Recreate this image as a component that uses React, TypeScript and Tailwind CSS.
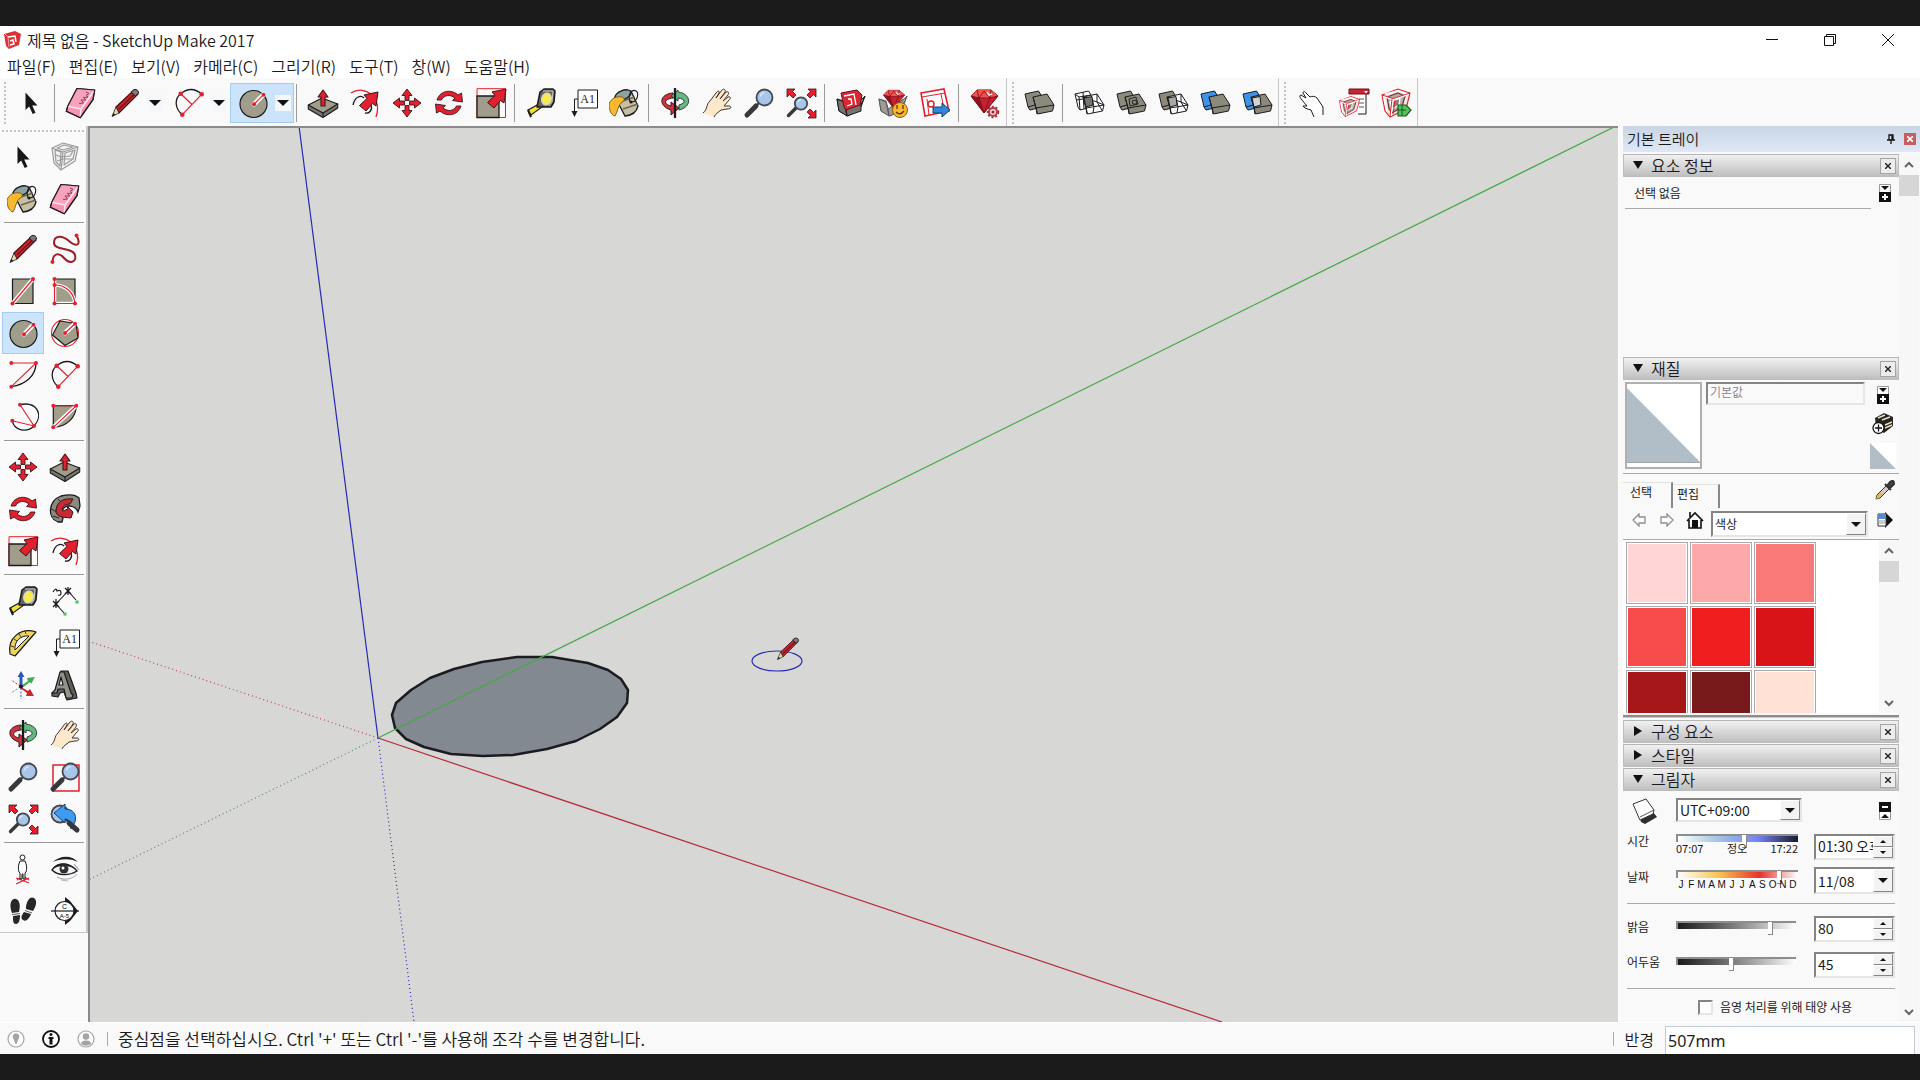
import { useState } from "react";
import type { ReactNode } from "react";

const RED = "#e3202f";
const DARK = "#3b1518";
const TAN = "#a09e8a";
const INK = "#1b1b1f";

/* ---------- icons, all drawn on a 32 x 32 grid ---------- */

const Dot = ({ x, y, r = 2 }: { x: number; y: number; r?: number }) => <circle cx={x} cy={y} r={r} fill={RED} />;

const Lens = ({ x, y, r }: { x: number; y: number; r: number }) => (
  <>
    <circle cx={x} cy={y} r={r} fill="#a9c6ea" stroke="#45484f" strokeWidth="1.8" />
    <path d={`M${x - r * 0.5} ${y - 1} Q${x - r * 0.4} ${y - r * 0.6} ${x} ${y - r * 0.6}`} fill="none" stroke="#d7e7f8" strokeWidth="1.5" />
  </>
);

const Glass = () => (
  <>
    <path d="M13 19 4 28" stroke="#36383d" strokeWidth="5" strokeLinecap="round" />
    <path d="M14 18 17 15" stroke="#36383d" strokeWidth="2" />
    <Lens x={21.5} y={10.5} r={8} />
  </>
);

const Extents = () => (
  <>
    <path d="M11 21 3.5 28.5" stroke="#36383d" strokeWidth="3.4" strokeLinecap="round" />
    <Lens x={16} y={16.5} r={6.2} />
    <g fill={RED} stroke={DARK} strokeWidth="0.8" strokeLinejoin="round">
      <path d="M2 2H10L7.5 4.5 11 8 8 11 4.5 7.5 2 10Z" />
      <path d="M31 2H23L25.500 4.500 22 8 25 11 28.500 7.500 31 10Z" />
      <path d="M31 31H23L25.500 28.500 22 25 25 22 28.500 25.500 31 23Z" />
    </g>
  </>
);

// two overlapping blocks; the fills tell the solid tools apart
const Blocks = ({ back, front, mid, wire }: { back: string; front: string; mid?: string; wire?: boolean }) => (
  <g stroke={INK} strokeWidth="1" strokeLinejoin="round">
    <path d="M2 7 15.5 4 18 8 19 20 7 23 5 20Z" fill={back} />
    {back !== "#fff" && <path d="M5 20 12 18" fill="none" />}
    {wire && back === "#fff" && <path d="M2 7 6 10 18 8M6 10 7 23M3.500 13 16 11M10 5 11 22" fill="none" />}
    <path d="M10 10 24 7 31 18 29.500 24 14.500 27 13 21Z" fill={front} />
    <path d="M13 21 31 18M14 27 13 21 10 10" fill="none" />
    {front === "#fff" && <path d="M19 11 21 20 20 26M10 10 24 15 29.500 24M24 7 24 15 31 18" fill="none" />}
    {mid && <path d="M11 11 19 9.500 20 18 13 20Z" fill={mid} />}
  </g>
);

const House = () => (
  <>
    <path d="M2 8 18 2 30 6 26 22 10 30 5 24Z" fill="#fbe3e3" stroke={RED} strokeWidth="1.1" />
    <path d="M7 10 18 6 25 9 22 20 12 26 9 22Z" fill="#b9aaa4" stroke="#5f3f40" strokeWidth="1.2" />
    <path d="M10 15 20 11 19 18 12 22Z" fill="#8a7d78" stroke="#fff" strokeWidth="1.4" />
    <path d="M3 9 13 13 29 7M13 13 11 29M4 11 7 24M5 7 18 4 28 8" fill="none" stroke="#fff" strokeWidth="1.5" />
    <path d="M2 8 13 11.500 30 6M12 12 10 30M15 13 13 27" fill="none" stroke={RED} strokeWidth="0.9" />
  </>
);

const RedArrowNE = () => (
  <path d="M31 2 29 16 25.500 13.500 19 21 12.500 15.500 20 8.500 17 5Z" fill={RED} stroke={DARK} strokeWidth="1" strokeLinejoin="round" />
);

const Ruby = () => (
  <>
    <path d="M2 9 8 3H22L29 9 15 26Z" fill="#c91f2e" stroke="#5d0d15" strokeWidth="1" />
    <path d="M2 9 8 3H22L29 9 20 11 9 11Z" fill="#ee5350" />
    <path d="M15 26 10 11 2 9Z" fill="#8c1420" />
    <path d="M8 3 10 11 15 4 21 11 22 3M2 9 10 11H21L29 9M10 11 15 26 21 11" fill="none" stroke="#7b111c" strokeWidth="0.9" />
    <path d="M18 5 20 8 23 7" stroke="#ffe1d8" strokeWidth="1.5" fill="none" />
  </>
);

const Box = () => (
  <>
    <path d="M2 12 9 14 12 25 26 20 30 9 24 22 13 29 4 24Z" fill="#8a8582" stroke={INK} strokeWidth="1" />
    <path d="M2 12 9 15 12 29 4 24ZM30 10 26 13 26 24 12 29 11 22Z" fill="#777270" stroke={INK} strokeWidth="1" strokeLinejoin="round" />
  </>
);

const ICONS: Record<string, ReactNode> = {
  cursor: <path d="M10.500 5.500V23L14.200 19.500 17.700 27 20.500 25.700 17.200 18.500H22.500Z" fill="#17171a" />,
  eraser: (
    <g stroke="#2a1a20" strokeWidth="1.2" strokeLinejoin="round">
      <path d="M12 1.500 29.700 3 28 12.700 15.300 30.700 1.300 24.300 2.700 19.300Z" fill="#f894b0" />
      <path d="M12 1.500 29.700 3 16 22 2.700 19.300Z" fill="#f7a3bd" stroke="none" />
      <path d="M2.700 19.300 16 22 29.700 3M16 22 15.300 30" fill="none" stroke="#ffe6ee" strokeWidth="1.5" />
      <path d="M21 5 24 6.500 21 8.500 23 10 18.500 10.500 21 13 16 13 18.500 16 14 16.500" fill="none" stroke="#963b58" strokeWidth="1" />
      <path d="M12 1.500 29.700 3 28 12.700 15.300 30.700 1.300 24.300 2.700 19.300Z" fill="none" />
    </g>
  ),
  pencil: (
    <>
      <path d="M7 20 24 4 29 7 10 26Z" fill="#c4252d" stroke="#4a1215" strokeWidth="1.2" />
      <path d="M10 22 26 6.500" stroke="#7a161b" strokeWidth="1.5" />
      <path d="M22 5 25 2.500Q29.500 2 29.500 6L26.500 9Z" fill="#7f787a" stroke={INK} strokeWidth="1" />
      <path d="M7 20 10 26 3 29.500Z" fill="#eadbaf" stroke={INK} strokeWidth="0.8" />
      <path d="M4.500 26 6.500 27.800 3 29.500Z" fill={INK} />
    </>
  ),
  arc: (
    <>
      <path d="M9.300 27.700C2 22 1 12 7.700 6.700S22 1 28.700 7.300" fill="none" stroke={INK} strokeWidth="1.3" />
      <path d="M28.700 7.300 9.300 27.700M7.700 6.700 19 17.500" stroke={RED} strokeWidth="1.2" />
      <Dot x={28.7} y={7.3} r={2.3} />
      <Dot x={9.3} y={27.7} r={2.3} />
      <Dot x={7.7} y={6.7} r={2.3} />
    </>
  ),
  circle: (
    <>
      <circle cx="16.5" cy="17" r="13.5" fill={TAN} stroke={INK} strokeWidth="1.2" />
      <path d="M17 17.300 26.500 7.700" stroke="#fff" strokeWidth="4.5" strokeLinecap="round" />
      <path d="M17 17.300 26.500 7.700" stroke={RED} strokeWidth="1.2" />
      <Dot x={17} y={17.3} />
      <Dot x={26.5} y={7.7} />
    </>
  ),
  pushPull: (
    <g stroke={INK} strokeWidth="1.1" strokeLinejoin="round">
      <path d="M1.300 18V22L16 30.500 30.700 21V17Z" fill="#77766a" />
      <path d="M1.300 18 15 11 30.700 17 16 26Z" fill={TAN} />
      <path d="M16 26V30" />
      <path d="M16 3 21 10H18V19H14V10H11Z" fill={RED} stroke={DARK} />
    </g>
  ),
  offset: (
    <>
      <path d="M2 6C16-3 34 11 27 30" fill="none" stroke={RED} strokeWidth="1.3" />
      <path d="M4 18C6 9 12 8 15 11M22 18C24 23 20 27 16 26" fill="none" stroke={INK} strokeWidth="1.3" />
      <g transform="translate(-2 3)">
        <RedArrowNE />
      </g>
    </>
  ),
  move: (
    <g fill={RED} stroke={DARK} strokeWidth="0.9" strokeLinejoin="round">
      <path d="M16 2 21 8.500H18V13.500H14V8.500H11Z" />
      <path d="M16 2 21 8.500H18V13.500H14V8.500H11Z" transform="rotate(90 16 16)" />
      <path d="M16 2 21 8.500H18V13.500H14V8.500H11Z" transform="rotate(180 16 16)" />
      <path d="M16 2 21 8.500H18V13.500H14V8.500H11Z" transform="rotate(270 16 16)" />
    </g>
  ),
  rotate: (
    <g fill={RED} stroke={DARK} strokeWidth="0.9" strokeLinejoin="round">
      <path d="M4 13C7 3 19 2 25 8L28.500 6 29.500 15 19.500 13.500 22 11C17 7 11 8 8.500 13Z" />
      <path d="M4 13C7 3 19 2 25 8L28.500 6 29.500 15 19.500 13.500 22 11C17 7 11 8 8.500 13Z" transform="rotate(180 16 16)" />
    </g>
  ),
  scale: (
    <>
      <path d="M2 1.700H30.500V30.500H2Z" fill="#fff8f8" stroke={RED} strokeWidth="1" />
      <path d="M2 9H24V30.500H2Z" fill={TAN} stroke={INK} strokeWidth="1.3" />
      <RedArrowNE />
    </>
  ),
  tape: (
    <>
      <path d="M3 23 14 17 17 20 6 28Z" fill="#f4e032" stroke={INK} strokeWidth="1.2" />
      <path d="M3 23 6 30" stroke={INK} strokeWidth="2" />
      <path d="M15 5 19 2 28 2 30 4 29 15 26 20 12 20Z" fill="#63635f" stroke={INK} strokeWidth="1.5" strokeLinejoin="round" />
      <path d="M18 4 28 4 27 15 24 19" fill="none" stroke="#c9c9c4" strokeWidth="1" />
      <ellipse cx="21.5" cy="12" rx="4.8" ry="6" fill="#f6ea4c" stroke="#d6d6d0" strokeWidth="1.2" transform="rotate(15 21.500 12)" />
    </>
  ),
  label: (
    <>
      <path d="M11 3H30.500V21H11Z" fill="#fff" stroke={INK} strokeWidth="1" />
      <text x="20.7" y="16" textAnchor="middle" fontFamily="Liberation Serif, serif" fontSize="12" fill={INK}>A1</text>
      <path d="M11 12H7.500V25" fill="none" stroke={INK} strokeWidth="1" />
      <path d="M4.500 24H10.500L7.500 30Z" fill={INK} />
    </>
  ),
  bucket: (
    <>
      <path d="M6 10 22 4 29 19Q27 28 16 29Z" fill="#c6bfa2" stroke={INK} strokeWidth="1.3" />
      <path d="M11 15 26 10M14 22 29 17" stroke="#6b6757" strokeWidth="1.6" />
      <ellipse cx="14" cy="8" rx="8.5" ry="4.5" fill="#8ba3a2" stroke={INK} strokeWidth="1.3" transform="rotate(-22 14 8)" />
      <path d="M21 15C18 6 24 2 27 4S29 14 23 15" fill="none" stroke={INK} strokeWidth="1.1" />
      <circle cx="22" cy="15" r="1.5" fill={INK} />
      <path d="M0 17C2 11 8 9 13 10C16 11 16 14 13 15C9 18 9 24 6 29C2 28 0 23 0 17Z" fill="#f9b82f" stroke="#7a5413" strokeWidth="0.9" />
    </>
  ),
  orbit: (
    <>
      <path d="M14 6C0 7-1 19 12 23V28L20 21 12 15V19C4 17 5 12 14 11Z" fill="#cf3340" stroke={DARK} strokeWidth="1" />
      <path d="M19 5C33 7 33 20 20 23V18C27 16 27 12 19 11V14L12 9 19 3Z" fill="#69b585" stroke="#1c4a2d" strokeWidth="1" />
      <path d="M16 1V31" stroke={INK} strokeWidth="2.3" />
    </>
  ),
  hand: (
    <path
      d="M2 26C7 22 5 17 9 14L15 6C17 3 19 4 18 6L15 11 21 3C23 1 25 3 24 5L19 12 25 5C28 4 28 6 27 8L22 14 27 10C30 9 30 12 28 13L23 19H29C31 21 29 22 26 22L20 23C17 26 15 26 13 30"
      fill="#fde8cb" stroke="#43362e" strokeWidth="1" strokeLinejoin="round"
    />
  ),
  zoom: <Glass />,
  extents: <Extents />,
  zoomWindow: (
    <>
      <path d="M4 4H30V30H4Z" fill="none" stroke={RED} strokeWidth="1.5" />
      <Glass />
    </>
  ),
  previous: (
    <>
      <Lens x={11} y={11} r={8.5} />
      <path d="M5 10 16 1V6C24 6 28 11 26 19L22 26C22 19 20 16 16 16V20Z" fill="#3d9bf0" stroke="#15406d" strokeWidth="1" strokeLinejoin="round" />
      <path d="M17 17 20 19" stroke="#36383d" strokeWidth="2" />
      <path d="M20 20 28 27" stroke="#36383d" strokeWidth="5" strokeLinecap="round" />
    </>
  ),
  warehouse: (
    <>
      <Box />
      <path d="M6 6 22 3 27 8 25 18 11 23 9 20Z" fill="#d82835" stroke="#6d1018" />
      <path d="M9 9 19 7 21 18M13 12 16 12 17 17 12 19" fill="none" stroke="#fff" strokeWidth="1.3" />
    </>
  ),
  extensions: (
    <>
      <g opacity="0.7">
        <Box />
      </g>
      <g transform="translate(5 1) scale(.78)">
        <Ruby />
      </g>
      <circle cx="23" cy="23" r="7.5" fill="#fbb72d" stroke="#8c5a16" />
      <path d="M20 18V22M26 18V22M19 25Q23 29 27 24" stroke="#563412" strokeWidth="1.3" fill="none" />
    </>
  ),
  layout: (
    <>
      <path d="M2 6 25 2 30 24 6 29Z" fill="#fff" stroke={RED} strokeWidth="1.6" />
      <path d="M3 10 26 6M8 12 10 28M22 7 25 22" stroke={RED} strokeWidth="1" />
      <circle cx="12" cy="17" r="3" fill="none" stroke={RED} strokeWidth="1.5" />
      <path d="M14 20H23V16L31 23 23 30V26H14Z" fill="#2f86dc" stroke="#173e68" strokeWidth="1" />
    </>
  ),
  ruby: (
    <>
      <Ruby />
      <circle cx="24" cy="25" r="4" fill="#f8d9d9" stroke="#b93a44" strokeWidth="2" />
      <circle cx="24" cy="25" r="5.5" fill="none" stroke="#8f2630" strokeWidth="1.5" strokeDasharray="2 2" />
      <circle cx="24" cy="25" r="1.5" fill="#8f2630" />
    </>
  ),
  outerShell: <Blocks back="#8c8a7d" front="#8c8a7d" />,
  intersect: <Blocks back="#fff" front="#fff" mid="#77766c" wire />,
  union: (
    <>
      <Blocks back="#8c8a7d" front="#8c8a7d" />
      <path d="M14 12 21 10 23 17 15 19ZM17 14 21 13 22 17 18 17Z" fill="none" stroke={INK} strokeWidth="0.9" />
    </>
  ),
  subtract: <Blocks back="#8c8a7d" front="#fff" mid="#a9a9a2" wire />,
  trim: <Blocks back="#3c93e8" front="#8c8a7d" />,
  split: <Blocks back="#3c93e8" front="#8c8a7d" mid="#d3d3d3" />,
  pointer: (
    <path
      d="M18 30 15 23C11 22 8 21 7 19L11 19 6 13C4 11 3 8 5 8L10 11 7 6C7 4 9 4 10 6L14 10C16 9 19 9 21 11L27 20V28"
      fill="#fff" stroke={INK} strokeWidth="1" strokeLinejoin="round"
    />
  ),
  componentOptions: (
    <>
      <path d="M15 5H28V27H20" fill="#fff" stroke={INK} strokeWidth="1" />
      <path d="M21 12H26M21 16H26M21 20H26" stroke="#555" strokeWidth="1" />
      <path d="M11 2H31V7H11Z" fill="#cb2433" stroke="#701019" />
      <path d="M26 4H30L28 6.500Z" fill="#fff" />
      <g transform="translate(0 8) scale(.72)">
        <House />
      </g>
    </>
  ),
  componentAttributes: (
    <>
      <House />
      <path d="M18 18H26L31 23 26 29H18Z" fill="#54c05a" stroke="#195b20" strokeWidth="1.2" />
      <path d="M18 23H26M22 18V29" stroke="#195b20" />
    </>
  ),
  component: (
    <g fill="none" stroke="#9b9b9d" strokeWidth="1.2" strokeLinejoin="round">
      <path d="M3 7 14 2 29 6 26 20 12 29 5 22Z" fill="#f1f1f1" />
      <path d="M3 7 14 11 29 6M14 11 12 29M6 9 12 11 11 25 7 21ZM16 12 26 9 24 18 15 24ZM8 7 15 4 24 6 14 9Z" />
      <path d="M7 14 12 16 21 15 24 10M8 20 14 18 24 18" />
    </g>
  ),
  freehand: (
    <>
      <path d="M3.500 29C4 20 10 19 15 25S28 30 26 22 5 18 5 10 13 2 20 8 33 13 27.500 2.500" fill="none" stroke="#9b2029" strokeWidth="2" />
      <Dot x={3.5} y={29} />
      <Dot x={27.5} y={2.5} />
    </>
  ),
  rect: (
    <>
      <path d="M5.500 4H26V28.500H5.500Z" fill={TAN} stroke={INK} strokeWidth="1.2" />
      <path d="M5.500 28.500 26 4" stroke="#fff" strokeWidth="4" />
      <path d="M5.500 28.500 26 4" stroke={RED} strokeWidth="1.2" />
      <Dot x={5.5} y={28.5} />
      <Dot x={26} y={4} />
    </>
  ),
  rotatedRect: (
    <>
      <path d="M5.500 4H26V28.500H5.500Z" fill={TAN} stroke={INK} strokeWidth="1.2" />
      <path d="M5.500 10C17 10 25 18 26 28.500M5.500 4V28.500H26" fill="none" stroke="#fff" strokeWidth="3.5" />
      <path d="M5.500 10C17 10 25 18 26 28.500M5.500 4V28.500H26" fill="none" stroke={RED} strokeWidth="1.2" />
      <Dot x={5.5} y={4} />
      <Dot x={5.5} y={10} />
      <Dot x={5.5} y={28.5} />
      <Dot x={26} y={28.5} />
    </>
  ),
  polygon: (
    <>
      <circle cx="16" cy="16" r="13.5" fill="#fff" stroke={RED} strokeWidth="1.1" />
      <path d="M11 4 27 6.500 29 21 16 28.500 3.500 18Z" fill={TAN} stroke={INK} strokeWidth="1.2" />
      <path d="M16 16 26 6.700" stroke="#fff" strokeWidth="4.5" strokeLinecap="round" />
      <path d="M16 16 26 6.700" stroke={RED} strokeWidth="1.2" />
      <Dot x={16} y={16} />
      <Dot x={26} y={6.7} />
    </>
  ),
  twoPointArc: (
    <>
      <path d="M29 4C29 17 18 26 4.300 27.700" fill="none" stroke={INK} strokeWidth="1.3" />
      <path d="M4.300 27.700 29 4H4.300" fill="none" stroke={RED} strokeWidth="1.1" />
      <Dot x={4.3} y={4} />
      <Dot x={29} y={4} />
      <Dot x={4.3} y={27.7} />
    </>
  ),
  threePointArc: (
    <>
      <path d="M13 3.700C30 0 37 14 27 25 20 32 7 30 5.300 19.700" fill="none" stroke={INK} strokeWidth="1.3" />
      <path d="M13 3.700 27 25 5.300 19.700" fill="none" stroke={RED} strokeWidth="1.1" />
      <Dot x={13} y={3.7} />
      <Dot x={27} y={25} />
      <Dot x={5.3} y={19.7} />
    </>
  ),
  pie: (
    <>
      <path d="M4.300 4.700H27.300C27 16 18 26 4.300 26.300Z" fill={TAN} stroke={INK} strokeWidth="1.2" />
      <path d="M4.300 26.300 27.300 4.700" stroke="#fff" strokeWidth="4" />
      <path d="M4.300 26.300 27.300 4.700H4.300" fill="none" stroke={RED} strokeWidth="1.1" />
      <Dot x={4.3} y={4.7} />
      <Dot x={27.3} y={4.7} />
      <Dot x={4.3} y={26.3} />
    </>
  ),
  followMe: (
    <>
      <path d="M9 29C-2 25-1 8 12 3 20 1 27 2 30 5L31 13 29 19C27 13 20 12 16 14 12 17 12 21 14 25L13 29Z" fill="#8b8a80" stroke={INK} strokeWidth="1.3" />
      <path d="M2 16 8 19M9 6 13 10M4 23 10 25" stroke={INK} strokeWidth="0.9" />
      <path d="M7 17C8 8 15 5 24 6L21 11C15 11 12 15 14 18L19 16 18 13 24 19 22 25 13 24Q6 22 7 17Z" fill="#c92b35" stroke={DARK} strokeWidth="1" />
    </>
  ),
  dimension: (
    <>
      <path d="M7 19 19 6M7 19 15 28M19 6 27 15" stroke={INK} strokeWidth="1.1" />
      <path d="M4 16 10 22M10 16 4 22M7 14V23M16 3 22 9M22 3 16 9M19 2V10" stroke={INK} strokeWidth="1.3" />
      <path d="M4 7Q7 2 8 6 12 4 12 8 12 11 9 10" fill="none" stroke={INK} strokeWidth="1.2" />
      <circle cx="16" cy="29" r="1.8" fill="#59bd65" />
      <circle cx="28" cy="17" r="1.8" fill="#59bd65" />
    </>
  ),
  protractor: (
    <>
      <path d="M29 5C14 0 0 11 3 27L8 29Z" fill="#eed35c" stroke={INK} strokeWidth="1.2" strokeLinejoin="round" />
      <path d="M22 9C13 8 7 15 8 23Z" fill="#fafafa" stroke={INK} strokeWidth="1" />
      <path d="M18 4 19 7M12 7 14 10M7 12 10 14M4 19 7 20" stroke={INK} strokeWidth="0.8" />
    </>
  ),
  axes: (
    <>
      <path d="M12.500 18V8H10.500L14 2 17.500 8H15.500V18Z" fill="#2a57b8" />
      <path d="M14 17 21 12 20 9 28 8 24 15 23 13 15 19Z" fill="#42a854" />
      <path d="M14 18 21 22 23 20 27 27 19 27 20 24 13 19Z" fill="#d2242f" />
      <path d="M13 17 4 11" stroke={RED} strokeDasharray="2 1.5" />
      <path d="M13 18 4 24" stroke="#42a854" strokeDasharray="2 1.5" />
      <path d="M14 19V30" stroke="#2a57b8" strokeDasharray="2 1.5" />
      <circle cx="14" cy="17.5" r="2" fill={INK} />
    </>
  ),
  text3d: (
    <g stroke={INK} strokeWidth="1.2" strokeLinejoin="round">
      <path d="M12 2 19 2 27 24 28 29 18 31 15 23 11 24 9 28 3 27 3 24 6 22Z" fill="#5f5e57" />
      <path d="M11 3 15 3 22 24 24 26 23 29 17 29 15 20 9 20 8 24 3 24 6 21Z" fill="#94938a" />
      <path d="M12 8 14 16 10 16Z" fill="#fff" />
    </g>
  ),
  positionCamera: (
    <>
      <path d="M9 25 22 30M22 25 9 31M10 27 16 23 22 27" stroke={RED} strokeWidth="1.2" fill="none" />
      <circle cx="15.5" cy="4.5" r="2.5" fill="#fff" stroke={INK} strokeWidth="1" />
      <path d="M13 8H18C20 12 20 16 19 19L18 20V26H16V21H15V26H13V20L12 19C11 16 11 12 13 8Z" fill="#fff" stroke={INK} strokeWidth="1" />
    </>
  ),
  eye: (
    <>
      <path d="M4 9C10 3 22 1 29 9 20 5 11 6 4 9Z" fill="#202023" />
      <path d="M3 17C9 9 20 9 28 18 20 23 9 23 3 17Z" fill="#f5f5f5" stroke={INK} strokeWidth="1.3" />
      <path d="M3 16C9 8 20 9 27 16 20 12 10 12 3 16Z" fill="#202023" />
      <circle cx="15" cy="16" r="4.5" fill="#303034" />
      <circle cx="14" cy="15" r="1.5" fill="#fff" />
      <path d="M8 24C15 28 24 26 28 21M25 11 30 17M12 27 19 28" fill="none" stroke="#b4b4b6" strokeWidth="1.2" />
    </>
  ),
  feet: (
    <>
      <path d="M4 15C2 6 6 3 9 4S14 9 12 17L5 18ZM6 21 13 20C13 25 12 29 9 29S6 26 6 21Z" fill="#27272a" />
      <path d="M19 12C20 4 24 1 27 3S30 10 26 16L19 14ZM17 17 24 19C22 24 19 27 16 25S15 20 17 17Z" fill="#27272a" />
      <path d="M5 19.500 13 18.500M18 15.500 25 18" stroke="#5c5c60" strokeWidth="1" />
    </>
  ),
  section: (
    <>
      <path d="M16 2 21 6 29 16 21 26 16 30Z" fill={INK} />
      <circle cx="15.5" cy="16" r="9.5" fill="#fff" stroke={INK} strokeWidth="1.2" />
      <path d="M2 16H30" stroke={INK} strokeWidth="1.2" />
      <text x="15.5" y="14" textAnchor="middle" fontSize="7" fontFamily="Liberation Sans, sans-serif">C</text>
      <text x="15.5" y="23" textAnchor="middle" fontSize="6" fontFamily="Liberation Sans, sans-serif">A-5</text>
    </>
  ),
};

function Icon({ name }: { name: string }) {
  return (
    <svg viewBox="0 0 32 32" className="size-8 shrink-0" aria-hidden="true">
      {ICONS[name]}
    </svg>
  );
}

/* ---------- toolbars ---------- */

function ToolButton({ name, active, tall }: { name: string; active?: boolean; tall?: boolean }) {
  return (
    <button
      aria-label={name}
      className={`flex w-[42px] shrink-0 items-center justify-center border ${tall ? "h-[42px]" : "h-10"} ${
        active ? "border-[#a6cdf0] bg-[#cce4fb]" : "border-transparent hover:bg-[#e5f1fb]"
      }`}
    >
      <Icon name={name} />
    </button>
  );
}

function SplitButton({ name, active }: { name: string; active?: boolean }) {
  return (
    <div className={`flex h-10 w-16 shrink-0 items-center border ${active ? "border-[#a6cdf0] bg-[#cce4fb]" : "border-transparent"}`}>
      <button aria-label={name} className="flex w-11 items-center justify-center">
        <Icon name={name} />
      </button>
      <button aria-label={`${name} menu`} className="flex h-4 w-4 items-center justify-center bg-[#f5f7fa]">
        <svg viewBox="0 0 12 6" className="h-[6px] w-3" aria-hidden="true">
          <path d="M0 0H12L6 6Z" fill="#111" />
        </svg>
      </button>
    </div>
  );
}

const Divider = () => <div className="mr-[5px] ml-[2px] h-[38px] w-px shrink-0 bg-[#9a9a9a]" />;

const Grip = () => <div className="mx-1 h-[42px] w-0 shrink-0 border-l-2 border-dotted border-[#c4c4c4]" />;

const MAIN_TOOLS = [
  ["pushPull", "offset", "move", "rotate", "scale"],
  ["tape", "label", "bucket"],
  ["orbit", "hand", "zoom", "extents"],
  ["warehouse", "extensions", "layout"],
  ["ruby"],
];
const SOLID_TOOLS = ["intersect", "union", "subtract", "trim", "split"];
const DYNAMIC_TOOLS = ["pointer", "componentOptions", "componentAttributes"];

function Toolbar() {
  return (
    <div className="flex h-12 shrink-0 items-center overflow-hidden bg-[#f9f9f9]">
      <div className="flex h-full items-center border-r border-[#c8c8c8] pt-[2px]">
        <Grip />
        <ToolButton name="cursor" />
        <Divider />
        <ToolButton name="eraser" />
        <SplitButton name="pencil" />
        <SplitButton name="arc" />
        <SplitButton name="circle" active />
        {MAIN_TOOLS.map((group) => (
          <div key={group[0]} className="flex items-center">
            <Divider />
            {group.map((t) => (
              <ToolButton key={t} name={t} />
            ))}
          </div>
        ))}
      </div>
      <div className="flex h-full items-center border-r border-[#c8c8c8] pt-[2px] pl-px">
        <Grip />
        <ToolButton name="outerShell" />
        <Divider />
        {SOLID_TOOLS.map((t) => (
          <ToolButton key={t} name={t} />
        ))}
      </div>
      <div className="flex h-full items-center border-r border-[#c8c8c8] pt-[2px] pl-px">
        <Grip />
        <div className="flex pl-px">
          {DYNAMIC_TOOLS.map((t) => (
            <ToolButton key={t} name={t} />
          ))}
        </div>
      </div>
    </div>
  );
}

const PALETTE = [
  ["cursor", "component", "bucket", "eraser"],
  ["pencil", "freehand", "rect", "rotatedRect", "circle", "polygon", "twoPointArc", "arc", "threePointArc", "pie"],
  ["move", "pushPull", "rotate", "followMe", "scale", "offset"],
  ["tape", "dimension", "protractor", "label", "axes", "text3d"],
  ["orbit", "hand", "zoom", "zoomWindow", "extents", "previous"],
  ["positionCamera", "eye", "feet", "section"],
];

function Palette() {
  return (
    <aside className="w-[88px] shrink-0 bg-[#f9f9f9]">
      <div className="border-r-2 border-b border-[#c8c8c8] bg-[#fbfafb] pl-[2px]">
        <div className="mb-1 h-[6px] w-[82px] border-b-2 border-dotted border-[#c4c4c4]" />
        {PALETTE.map((group, i) => (
          <div key={i}>
            {i > 0 && <div className="mt-[2px] mr-[2px] mb-[5px] ml-[2px] h-px bg-[#9a9a9a]" />}
            <div className="grid grid-cols-2">
              {group.map((t) => (
                <ToolButton key={t} name={t} active={t === "circle"} tall />
              ))}
            </div>
          </div>
        ))}
      </div>
    </aside>
  );
}

/* ---------- drawing area ---------- */

const FACE =
  "304,589 308,577 323,564 342,552 366,543 394,536 429,531 464,531 500,537 520,544 533,553 540,564 539,577 529,591 512,603 488,615 459,623 425,629 395,630 363,628 336,621 318,613 307,602";

function Viewport() {
  return (
    <main className="min-w-0 flex-1 border-t-2 border-l-2 border-t-[#8a8a8a] border-l-[#8a8a8a] bg-[#d7d7d5]">
      <svg viewBox="2 2 1528 894" preserveAspectRatio="xMinYMin slice" className="h-full w-full" role="img" aria-label="Model">
        <polygon points={FACE} fill="#838990" stroke="#1c1c20" strokeWidth="2.5" strokeLinejoin="round" />
        <g fill="none" strokeWidth="1.2">
          <path d="M290 612 211 0" stroke="#2a2ab4" />
          <path d="M290 612 1528 0" stroke="#46a846" />
          <path d="M290 612 1134 896" stroke="#b82a38" />
          <path d="M290 612 0 515" stroke="#c04450" strokeDasharray="1 3" />
          <path d="M290 612 0 754" stroke="#5a8f5a" strokeDasharray="1 3" />
          <path d="M290 612 326 896" stroke="#2a2ab4" strokeDasharray="1 3" />
          <ellipse cx="689" cy="535" rx="25" ry="10" stroke="#2a2ab4" />
        </g>
        <g transform="translate(687 510) scale(.8)">{ICONS.pencil}</g>
      </svg>
    </main>
  );
}

/* ---------- tray ---------- */

const SUNKEN = "border-2 border-t-[#848484] border-l-[#848484] border-r-[#e6e6e6] border-b-[#e6e6e6]";
const RAISED = "border border-t-white border-l-white border-r-[#858585] border-b-[#858585] bg-[#f3f3f3]";

const Triangle = ({ open }: { open?: boolean }) => (
  <svg viewBox="0 0 10 10" className="size-[10px]" aria-hidden="true">
    <path d={open ? "M0 1H10L5 9Z" : "M1 0V10L9 5Z"} fill="#111" />
  </svg>
);

const Chevron = ({ down }: { down?: boolean }) => (
  <svg viewBox="0 0 10 8" className="h-2 w-[10px]" aria-hidden="true">
    <path d={down ? "M1 2 5 6 9 2" : "M1 6 5 2 9 6"} fill="none" stroke="#666" strokeWidth="2" />
  </svg>
);

function PanelHeader({ title, open }: { title: string; open?: boolean }) {
  return (
    <div className="flex h-[23px] items-center border border-[#bdbdbd] border-t-[#b5b5b5] bg-linear-to-b from-[#f1f1f1] to-[#bfbfbf] pr-[2px] pl-[9px]">
      <button className="flex flex-1 items-center gap-2 pb-[2px] text-left text-base leading-5 font-[350]">
        <Triangle open={open} />
        {title}
      </button>
      <button aria-label={`${title} 닫기`} className="flex size-4 items-center justify-center border border-[#a5a5a5] bg-[#ececec]">
        <svg viewBox="0 0 6 6" className="size-[6px]" aria-hidden="true">
          <path d="M0 0 6 6M6 0 0 6" stroke="#222" strokeWidth="1.4" />
        </svg>
      </button>
    </div>
  );
}

function DetailToggle({ minus }: { minus?: boolean }) {
  return (
    <button aria-label="세부 정보" className="h-[18px] w-3">
      <svg viewBox="0 0 12 18" className="h-[18px] w-3" aria-hidden="true">
        <path d="M.5 .5H11.500V17.500H.5Z" fill="#fff" stroke="#999" />
        {minus ? (
          <path d="M0 0H12V10H0ZM2 16H10L6 12Z" fill="#111" />
        ) : (
          <path d="M0 8H12V18H0ZM2 2H10L6 6Z" fill="#111" />
        )}
        <path d={minus ? "M3 5H9" : "M3 13H9M6 10V16"} stroke="#fff" strokeWidth="2" />
      </svg>
    </button>
  );
}

const ArrowDown = () => (
  <svg viewBox="0 0 10 5" className="h-[5px] w-[10px]" aria-hidden="true">
    <path d="M0 0H10L5 5Z" fill="#111" />
  </svg>
);

function DropDown({ label, options, className }: { label: string; options: string[]; className: string }) {
  return (
    <div className={`flex bg-white ${SUNKEN} ${className}`}>
      <select aria-label={label} className="min-w-0 flex-1 appearance-none bg-transparent pl-[2px] outline-none">
        {options.map((o) => (
          <option key={o}>{o}</option>
        ))}
      </select>
      <span className={`pointer-events-none flex w-5 items-center justify-center ${RAISED}`}>
        <ArrowDown />
      </span>
    </div>
  );
}

function Spin({ label, value, onChange }: { label: string; value: string; onChange: (v: string) => void }) {
  return (
    <div className={`flex h-[26px] w-[81px] bg-white ${SUNKEN}`}>
      <input
        aria-label={label}
        value={value}
        onChange={(e) => onChange(e.target.value)}
        className="min-w-0 flex-1 bg-transparent pb-[2px] pl-[2px] text-sm leading-5 outline-none"
      />
      <div className="flex w-5 shrink-0 flex-col">
        {["up", "down"].map((d) => (
          <button key={d} aria-label={`${label} ${d}`} className={`flex flex-1 items-center justify-center ${RAISED}`}>
            <svg viewBox="0 0 6 3" className="h-[3px] w-[6px]" aria-hidden="true">
              <path d={d === "up" ? "M0 3H6L3 0Z" : "M0 0H6L3 3Z"} fill="#111" />
            </svg>
          </button>
        ))}
      </div>
    </div>
  );
}

function Slider({ id, value, onChange, track }: { id: string; value: number; onChange: (v: number) => void; track: string }) {
  return (
    <input
      id={id}
      type="range"
      value={value}
      onChange={(e) => onChange(Number(e.target.value))}
      className={`block h-2 w-full appearance-none border-t-2 border-l-2 border-[#8d8d8d] outline-none [&::-webkit-slider-thumb]:mt-1 [&::-webkit-slider-thumb]:h-[13px] [&::-webkit-slider-thumb]:w-[5px] [&::-webkit-slider-thumb]:appearance-none [&::-webkit-slider-thumb]:border-r [&::-webkit-slider-thumb]:border-b [&::-webkit-slider-thumb]:border-[#888] [&::-webkit-slider-thumb]:bg-white ${track}`}
    />
  );
}

const SWATCHES = [
  { name: "색상 A01", color: "bg-[#ffd5d5]" },
  { name: "색상 A02", color: "bg-[#fda9a9]" },
  { name: "색상 A03", color: "bg-[#f97878]" },
  { name: "색상 A04", color: "bg-[#f64c4c]" },
  { name: "색상 A05", color: "bg-[#f11e20]" },
  { name: "색상 A06", color: "bg-[#d91418]" },
  { name: "색상 A07", color: "bg-[#a61719]" },
  { name: "색상 A08", color: "bg-[#78191b]" },
  { name: "색상 B01", color: "bg-[#ffe1d6]" },
];

const MONTHS = ["J", "F", "M", "A", "M", "J", "J", "A", "S", "O", "N", "D"];

function Materials() {
  return (
    <section>
      <PanelHeader title="재질" open />
      <div className="flex h-[94px] gap-1 border-b border-[#a8a8a8] px-[2px] pt-[2px] pb-1">
        <div className="h-[87px] w-[77px] shrink-0 border-2 border-[#b0b0b0] bg-white">
          <svg viewBox="0 0 73 83" className="h-full w-full" aria-hidden="true">
            <path d="M0 4V78H73Z" fill="#b1bec7" />
            <path d="M0 78.500H73" stroke="#a2a7ac" />
          </svg>
        </div>
        <div className="flex-1">
          <input aria-label="재질 이름" defaultValue="기본값" className={`block h-[23px] w-full bg-[#f9f9f9] pb-1 pl-[2px] text-xs font-[350] text-[#85808a] ${SUNKEN}`} />
        </div>
        <div className="flex w-7 flex-col items-center justify-between pt-1">
          <DetailToggle />
          <button aria-label="재질 만들기">
            <svg viewBox="0 0 22 22" className="size-[22px]" aria-hidden="true">
              <path d="M3 5 12 0 21 4V13L12 20 4 15Z" fill="#26241f" />
              <path d="M6 5 13 2M10 7 18 4M13 12 20 9M13 15 20 12" stroke="#e5dfc5" strokeWidth="1.5" />
              <circle cx="6.5" cy="15" r="5.5" fill="#fff" stroke="#111" strokeWidth="1.3" />
              <path d="M3 15H10M6.500 11.500V18.500" stroke="#111" strokeWidth="1.3" />
            </svg>
          </button>
          <svg viewBox="0 0 26 26" className="size-[26px] bg-white" aria-hidden="true">
            <path d="M0 0V26H26Z" fill="#b1bec7" />
          </svg>
        </div>
      </div>
      <div className="flex h-[34px] items-end pr-1 text-xs">
        <button className="h-[26px] w-[50px] border-t border-r-2 border-t-[#e2e2e2] border-r-[#888] pb-2 pl-[7px] text-left">선택</button>
        <button className="h-6 w-[47px] border-t border-r-2 border-t-[#e2e2e2] border-r-[#888] pb-[6px] pl-1 text-left">편집</button>
        <button aria-label="스포이트" className="ml-auto self-start pt-[6px]">
          <svg viewBox="0 0 20 20" className="size-5" aria-hidden="true">
            <path d="M2 15 11 6 14 9 5 18 1 19Z" fill="#d9c8c8" stroke="#333" />
            <path d="M2 16 6 12 8 14 4 18 1 19Z" fill="#e7b94c" />
            <path d="M10 4 16 10M12 6 15 2Q19-1 19 4L15 8Z" fill="#444" stroke="#333" strokeWidth="2" />
          </svg>
        </button>
      </div>
      <div className="flex h-8 items-start border-b border-[#a8a8a8] pt-[2px] pr-[6px] pl-[9px]">
        <button aria-label="뒤로" className="pt-[3px]">
          <svg viewBox="0 0 14 14" className="size-[14px]" aria-hidden="true">
            <path d="M1 7 7 1V4H13V10H7V13Z" fill="#fff" stroke="#8f8f8f" strokeWidth="1.3" />
          </svg>
        </button>
        <button aria-label="앞으로" className="ml-[14px] pt-[3px]">
          <svg viewBox="0 0 14 14" className="size-[14px]" aria-hidden="true">
            <path d="M13 7 7 1V4H1V10H7V13Z" fill="#fff" stroke="#8f8f8f" strokeWidth="1.3" />
          </svg>
        </button>
        <button aria-label="모델에서" className="mr-[7px] ml-3">
          <svg viewBox="0 0 18 20" className="h-5 w-[18px]" aria-hidden="true">
            <path d="M1 11 9 3 17 11M3 10V18H15V10M4 7V2" fill="none" stroke="#111" strokeWidth="1.6" />
            <path d="M6 10H12V18H6Z" fill="#111" />
          </svg>
        </button>
        <DropDown label="재질 모음" options={["색상"]} className="mt-px h-[26px] flex-1 text-xs" />
        <button aria-label="세부" className="ml-[9px] pt-[2px]">
          <svg viewBox="0 0 16 16" className="size-4" aria-hidden="true">
            <path d="M8 0 16 8 8 16Z" fill="#111" />
            <path d="M1 2H9V14H1Z" fill="#fff" stroke="#333" />
            <path d="M1 2H9V7H1Z" fill="#5a8ccb" />
            <path d="M2 9H8M2 11H8" stroke="#999" />
          </svg>
        </button>
      </div>
      <div className="flex h-[173px] overflow-hidden bg-white">
        <div className="grid flex-1 auto-rows-[64px] grid-cols-[64px_64px_64px] pt-[2px] pl-[3px]">
          {SWATCHES.map((s) => (
            <button key={s.name} aria-label={s.name} className={`size-[62px] border border-[#a9a9ad] outline-1 -outline-offset-2 outline-white ${s.color}`} />
          ))}
        </div>
        <ScrollBar />
      </div>
      <div className="mt-[2px] h-[3px] border-t-2 border-b border-t-[#8c8c8c] border-b-[#c8c8c8]" />
    </section>
  );
}

function ScrollBar() {
  return (
    <div className="flex w-5 shrink-0 flex-col items-center bg-[#f7f7f7]">
      <button aria-label="위로" className="flex h-[21px] items-center">
        <Chevron />
      </button>
      <div className="h-[21px] w-full bg-[#d6d6d6]" />
      <button aria-label="아래로" className="mt-auto flex h-5 items-center">
        <Chevron down />
      </button>
    </div>
  );
}

function Shadows() {
  const [time, setTime] = useState("01:30 오후");
  const [hour, setHour] = useState(56);
  const [day, setDay] = useState(86);
  const [light, setLight] = useState("80");
  const [dark, setDark] = useState("45");

  return (
    <section>
      <PanelHeader title="그림자" open />
      <div className="px-1">
        <div className="flex h-10 items-start pt-[7px]">
          <button aria-label="그림자 표시" className="ml-[5px]">
            <svg viewBox="0 0 26 26" className="size-[26px]" aria-hidden="true">
              <path d="M8 20 21 14 25 19 13 26 9 24Z" fill="#2d2d2f" />
              <path d="M1 6 14 1 22 12 21 16 8 22 7 20Z" fill="#fff" stroke="#333" strokeWidth="1" />
              <path d="M8 19 22 12" fill="none" stroke="#555" />
            </svg>
          </button>
          <DropDown label="시간대" options={["UTC+09:00"]} className="ml-[18px] h-6 w-[126px] text-sm" />
          <div className="mt-1 mr-1 ml-auto flex">
            <DetailToggle minus />
          </div>
        </div>

        <div className="grid grid-cols-[49px_1fr_81px] text-xs">
          <label htmlFor="hour" className="pt-[2px]">시간</label>
          <div className="h-9 pt-[3px] pr-4">
            <Slider id="hour" value={hour} onChange={setHour} track="bg-[linear-gradient(90deg,#fff,#a9cbe4_30%,#7583f2_66%,#1c1830)]" />
            <div className="flex justify-between text-[11px] leading-3">
              <span>07:07</span>
              <span>정오</span>
              <span>17:22</span>
            </div>
          </div>
          <div className="pt-[3px]">
            <Spin label="시각" value={time} onChange={setTime} />
          </div>

          <label htmlFor="day" className="pt-[2px]">날짜</label>
          <div className="h-9 pt-[3px] pr-4">
            <Slider id="day" value={day} onChange={setDay} track="bg-[linear-gradient(90deg,#fff,#f6c34a_35%,#e9302c_68%,#fff)]" />
            <div className="grid grid-cols-12 pt-px text-center font-['Liberation_Sans',sans-serif] text-[10px] leading-3 text-[#111]">
              {MONTHS.map((m, i) => (
                <span key={i}>{m}</span>
              ))}
            </div>
          </div>
          <DropDown label="날짜 선택" options={["11/08"]} className="h-[27px] text-sm" />
        </div>

        <div className="border-y border-[#a8a8a8] pt-3">
          <div className="grid grid-cols-[49px_1fr_81px] text-xs">
            <label htmlFor="light" className="pt-[3px]">밝음</label>
            <div className="h-9 pt-[5px] pr-[18px]">
              <Slider id="light" value={Number(light)} onChange={(v) => setLight(String(v))} track="bg-linear-to-r from-[#1c1c1c] to-white" />
            </div>
            <Spin label="밝음 값" value={light} onChange={setLight} />
            <label htmlFor="dark" className="pt-[2px]">어두움</label>
            <div className="h-9 pt-[5px] pr-[18px]">
              <Slider id="dark" value={Number(dark)} onChange={(v) => setDark(String(v))} track="bg-linear-to-r from-[#1c1c1c] to-white" />
            </div>
            <Spin label="어두움 값" value={dark} onChange={setDark} />
          </div>
        </div>

        <label className="flex items-center justify-center gap-[7px] pt-2 pl-7 text-xs leading-5">
          <input type="checkbox" className={`size-[15px] appearance-none bg-white ${SUNKEN}`} />
          음영 처리를 위해 태양 사용
        </label>
      </div>
    </section>
  );
}

function Tray() {
  return (
    <aside className="flex w-[302px] shrink-0 flex-col overflow-hidden border-l border-white bg-[#f9f9f9] pl-1 font-normal">
      <div className="flex h-[26px] shrink-0 items-center bg-linear-to-b from-[#c9d5e5] to-[#dee8f6] px-1 text-[15px]">
        <span className="flex-1 font-[350]">기본 트레이</span>
        <button aria-label="고정" className="mr-[9px]">
          <svg viewBox="0 0 8 10" className="h-[10px] w-2" aria-hidden="true">
            <path d="M2 6V1H6V6M0 6H8M4 6V10M5 1V6" fill="none" stroke="#111" strokeWidth="1.3" />
          </svg>
        </button>
        <button aria-label="닫기" className="flex size-3 items-center justify-center bg-[#c75f62]">
          <svg viewBox="0 0 6 6" className="size-[6px]" aria-hidden="true">
            <path d="M0 0 6 6M6 0 0 6" stroke="#fff" strokeWidth="1.6" />
          </svg>
        </button>
      </div>
      <div className="flex min-h-0 flex-1 pt-[2px] pr-px">
        <div className="min-w-0 flex-1">
          <section className="h-[203px]">
            <PanelHeader title="요소 정보" open />
            <div className="mr-7 ml-[2px] border-b border-[#a8a8a8]">
              <div className="-mr-5 flex h-[31px] items-center justify-between pl-[9px] text-xs">
                선택 없음
                <DetailToggle />
              </div>
            </div>
          </section>
          <Materials />
          <div className="flex flex-col gap-px pt-[2px]">
            <PanelHeader title="구성 요소" />
            <PanelHeader title="스타일" />
            <Shadows />
          </div>
        </div>
        <ScrollBar />
      </div>
    </aside>
  );
}

/* ---------- window ---------- */

const MENUS = ["파일(F)", "편집(E)", "보기(V)", "카메라(C)", "그리기(R)", "도구(T)", "창(W)", "도움말(H)"];

function TitleBar() {
  return (
    <header className="flex h-7 shrink-0 items-center gap-[6px] bg-white pl-1">
      <svg viewBox="0 0 17 18" className="h-[18px] w-[17px]" aria-hidden="true">
        <path d="M0 3 11 0 17 3 15 14 5 18 2 15Z" fill="#dd3035" />
        <path d="M4 6 11 5 12 11M6 10 9 9 10 13 6 14" fill="none" stroke="#fff" strokeWidth="1.5" />
        <path d="M1 3 4 6 5 16" fill="none" stroke="#f7b9bb" strokeWidth="0.8" />
      </svg>
      <h1 className="flex-1 pb-px text-base leading-6">제목 없음 - SketchUp Make 2017</h1>
      <div className="mr-[26px] flex items-center gap-[46px]">
        <button aria-label="최소화">
          <svg viewBox="0 0 12 12" className="size-3" aria-hidden="true">
            <path d="M0 5.500H12" stroke="#111" />
          </svg>
        </button>
        <button aria-label="이전 크기로">
          <svg viewBox="0 0 12 12" className="size-3" aria-hidden="true">
            <path d="M.5 2.500H9.500V11.500H.5ZM2.500 2.500V.5H11.500V9.500H9.500" fill="none" stroke="#111" />
          </svg>
        </button>
        <button aria-label="닫기">
          <svg viewBox="0 0 12 12" className="size-3" aria-hidden="true">
            <path d="M0 0 12 12M12 0 0 12" stroke="#111" />
          </svg>
        </button>
      </div>
    </header>
  );
}

function StatusBar() {
  return (
    <footer className="flex h-8 shrink-0 items-center border-t border-white bg-[#f9f9f9] pt-px pl-[7px]">
      <div className="flex gap-[17px]">
        <svg viewBox="0 0 18 18" className="size-[18px]" aria-hidden="true">
          <circle cx="9" cy="9" r="8" fill="#fff" stroke="#a4a4a4" strokeWidth="1.2" />
          <path d="M9 15 6 8A3.300 3.300 0 1 1 12 8Z" fill="#a4a4a4" />
        </svg>
        <svg viewBox="0 0 18 18" className="size-[18px]" aria-hidden="true">
          <circle cx="9" cy="9" r="8" fill="#fff" stroke="#111" strokeWidth="1.8" />
          <circle cx="9" cy="4.5" r="1.5" fill="#111" />
          <path d="M6.500 7H11.500V9H10.500V14.500H7.500V9H6.500Z" fill="#111" />
        </svg>
        <svg viewBox="0 0 18 18" className="size-[18px]" aria-hidden="true">
          <circle cx="9" cy="9" r="8" fill="#fff" stroke="#a4a4a4" strokeWidth="1.2" />
          <circle cx="9" cy="6.5" r="3.3" fill="#a4a4a4" />
          <path d="M4 14Q4 10.500 9 10.500T14 14Q9 17.500 4 14Z" fill="#a4a4a4" />
        </svg>
      </div>
      <div className="mr-[10px] ml-3 h-[14px] w-px bg-[#aaa]" />
      <p className="flex-1 text-[17px] leading-6">중심점을 선택하십시오. Ctrl '+' 또는 Ctrl '-'를 사용해 조각 수를 변경합니다.</p>
      <div className="mr-[11px] h-[14px] w-px bg-[#aaa]" />
      <label htmlFor="radius" className="mr-[11px] text-base leading-6">반경</label>
      <input
        id="radius"
        defaultValue="507mm"
        className="mr-[5px] h-7 w-[250px] self-end border border-b-0 border-[#c3cbd6] bg-white pl-[2px] font-['Noto_Sans',sans-serif] text-base font-normal outline-none"
      />
    </footer>
  );
}

export default function App() {
  return (
    <div className="flex h-screen flex-col overflow-hidden border-y-[26px] border-[#1b1b1b] bg-[#f9f9f9] font-['Noto_Sans_CJK_KR','Noto_Sans',sans-serif] font-[350] text-[#1c1a20]">
      <TitleBar />
      <nav className="flex h-6 shrink-0 items-center gap-[13px] bg-white pl-[7px] text-base leading-6">
        {MENUS.map((m) => (
          <button key={m}>{m}</button>
        ))}
      </nav>
      <Toolbar />
      <div className="flex min-h-0 flex-1">
        <Palette />
        <Viewport />
        <Tray />
      </div>
      <StatusBar />
    </div>
  );
}
